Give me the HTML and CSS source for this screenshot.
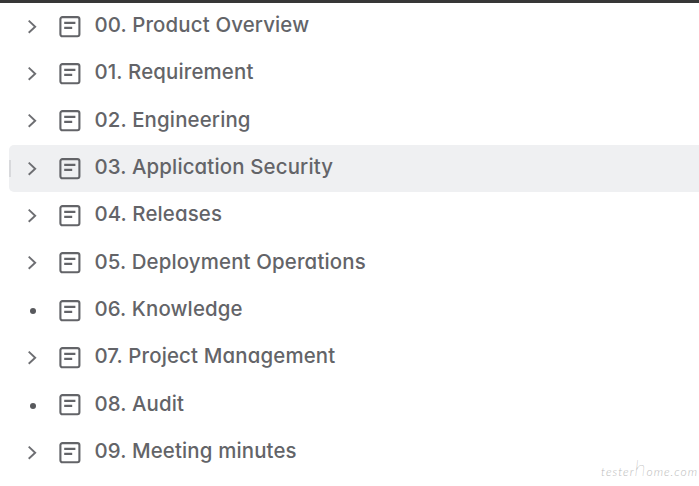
FILE: index.html
```
<!DOCTYPE html>
<html lang="en">
<head>
<meta charset="utf-8">
<title>Pages</title>
<link rel="stylesheet" href="styles.css">
</head>
<body>
<svg class="symbols" aria-hidden="true">
  <symbol id="chevron" viewBox="0 0 12 16"><path d="M1.7 1.6 L8.2 7.7 L1.7 13.8"/></symbol>
  <symbol id="page" viewBox="0 0 22 22"><rect x="1.4" y="1.1" width="19" height="19.2" rx="2"/><path d="M5.2 6.9H16.4M5.2 11.9H13.2"/></symbol>
</svg>
<nav class="tree">
  <a class="row"><span class="toggle"><svg class="chevron"><use href="#chevron"/></svg></span><svg class="page"><use href="#page"/></svg><span class="label">00. Product Overview</span></a>
  <a class="row"><span class="toggle"><svg class="chevron"><use href="#chevron"/></svg></span><svg class="page"><use href="#page"/></svg><span class="label">01. Requirement</span></a>
  <a class="row"><span class="toggle"><svg class="chevron"><use href="#chevron"/></svg></span><svg class="page"><use href="#page"/></svg><span class="label">02. Engineering</span></a>
  <a class="row active"><span class="toggle"><svg class="chevron"><use href="#chevron"/></svg></span><svg class="page"><use href="#page"/></svg><span class="label">03. Application Security</span></a>
  <a class="row"><span class="toggle"><svg class="chevron"><use href="#chevron"/></svg></span><svg class="page"><use href="#page"/></svg><span class="label">04. Releases</span></a>
  <a class="row"><span class="toggle"><svg class="chevron"><use href="#chevron"/></svg></span><svg class="page"><use href="#page"/></svg><span class="label">05. Deployment Operations</span></a>
  <a class="row"><span class="toggle"><i class="dot"></i></span><svg class="page"><use href="#page"/></svg><span class="label">06. Knowledge</span></a>
  <a class="row"><span class="toggle"><svg class="chevron"><use href="#chevron"/></svg></span><svg class="page"><use href="#page"/></svg><span class="label">07. Project Management</span></a>
  <a class="row"><span class="toggle"><i class="dot"></i></span><svg class="page"><use href="#page"/></svg><span class="label">08. Audit</span></a>
  <a class="row"><span class="toggle"><svg class="chevron"><use href="#chevron"/></svg></span><svg class="page"><use href="#page"/></svg><span class="label">09. Meeting minutes</span></a>
</nav>
<div class="watermark">tester<span class="tall">h</span>ome.com</div>
</body>
</html>
```
FILE: styles.css
```
* { box-sizing: border-box; }
body {
  margin: 0;
  height: 486px;
  overflow: hidden;
  position: relative;
  background: #fff;
  border-top: 3px solid #373737;
  font-family: Inter, "Liberation Sans", sans-serif;
  color: #636468;
}
.symbols { position: absolute; width: 0; height: 0; }
.tree { padding-left: 9px; }
.row {
  display: flex;
  align-items: center;
  height: 47.33px;
  border-radius: 5px 0 0 5px;
}
.active { background: #eff0f2; }
.active::before {
  content: "";
  width: 2px;
  height: 17px;
  margin-right: -2px;
  background: #d8d9dc;
}
.toggle {
  display: flex;
  align-items: center;
  justify-content: center;
  width: 20px;
  margin-left: 13px;
  margin-right: 8px;
}
.chevron { width: 12px; height: 16px; margin-left: 2px; fill: none; stroke: #6d6e72; stroke-width: 1.9; }
.dot { width: 6px; height: 6px; margin: 1px 0 0 1px; border-radius: 50%; background: #58595d; }
.page { width: 22px; height: 22px; margin-left: 9px; fill: none; stroke: #636468; stroke-width: 2.1; }
.label {
  margin: -3px 0 0 13.4px;
  font-size: 20.4px;
  font-weight: 500;
  line-height: 28px;
  letter-spacing: .16px;
  white-space: nowrap;
  font-feature-settings: "cv11";
}
.watermark {
  position: absolute;
  right: 1px;
  bottom: 6px;
  font: italic 300 12px/16px Lato, sans-serif;
  letter-spacing: .95px;
  color: #bbb;
  white-space: nowrap;
}
.tall { font-size: 22px; line-height: 12px; font-weight: 100; color: #888; }
```
